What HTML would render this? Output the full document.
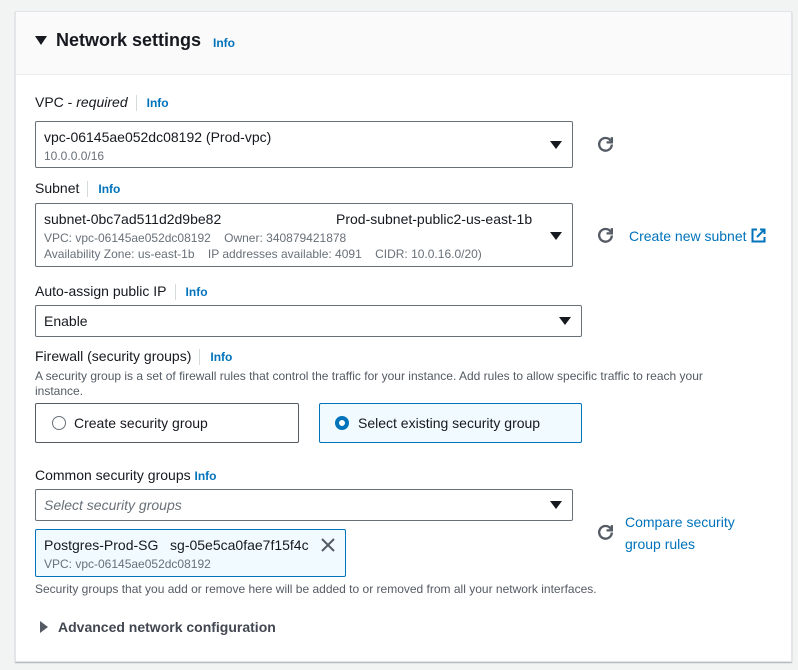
<!DOCTYPE html>
<html><head><style>
*{box-sizing:border-box;margin:0;padding:0}
body{width:798px;height:670px;background:#f2f3f3;font-family:"Liberation Sans",Arial,sans-serif;color:#16191f;position:relative;overflow:hidden}
.panel{position:absolute;left:15px;top:11px;width:777px;height:651px;background:#fff;border:1px solid #e1e4e8;box-shadow:0 1px 1px rgba(0,28,36,.3)}
.hdr{position:absolute;left:0;top:0;width:100%;height:63px;background:#fafafa;border-bottom:1px solid #eaeded}
.a{position:absolute;white-space:nowrap}
.info{color:#0073bb;font-weight:bold;font-size:12px}
.lbl{font-size:14px}
.sep{display:inline-block;width:1px;height:16px;background:#d5dbdb;vertical-align:middle;margin:0 10px 0 8px}
.box{position:absolute;border:1px solid #687078;border-radius:2px;background:#fff}
.sm{font-size:12px;color:#687078}
.tri{position:absolute;width:0;height:0;border-left:6px solid transparent;border-right:6px solid transparent;border-top:8px solid #16191f}
.link{color:#0073bb;font-size:14px}
</style></head><body>
<div class="panel">
<div class="hdr"></div>
</div>
<div class="a" style="left:35px;top:36px;width:0;height:0;border-left:6px solid transparent;border-right:6px solid transparent;border-top:9px solid #16191f"></div>
<div class="a" style="left:56px;top:30px;font-size:18px;font-weight:bold">Network settings</div>
<div class="a info" style="left:213px;top:36px">Info</div>

<div class="a lbl" style="left:35px;top:94px">VPC - <i>required</i><span class="sep"></span><span class="info">Info</span></div>
<div class="box" style="left:35px;top:121px;width:538px;height:47px"></div>
<div class="a lbl" style="left:44px;top:129px">vpc-06145ae052dc08192 (Prod-vpc)</div>
<div class="a sm" style="left:44px;top:149px">10.0.0.0/16</div>
<div class="tri" style="left:550px;top:141px"></div>
<svg class="a" style="left:596px;top:135px" width="19" height="19" viewBox="0 0 18 18"><path d="M14 5.5A6 6 0 1 0 15 9" fill="none" stroke="#545b64" stroke-width="2.2"/><path d="M15 2v5h-5" fill="none" stroke="#545b64" stroke-width="2.2"/></svg>

<div class="a lbl" style="left:35px;top:180px">Subnet<span class="sep"></span><span class="info">Info</span></div>
<div class="box" style="left:35px;top:203px;width:538px;height:64px"></div>
<div class="a lbl" style="left:44px;top:211px">subnet-0bc7ad511d2d9be82</div>
<div class="a lbl" style="left:336px;top:211px">Prod-subnet-public2-us-east-1b</div>
<div class="a sm" style="left:44px;top:231px">VPC: vpc-06145ae052dc08192&nbsp;&nbsp;&nbsp;&nbsp;Owner: 340879421878</div>
<div class="a sm" style="left:44px;top:247px">Availability Zone: us-east-1b&nbsp;&nbsp;&nbsp;&nbsp;IP addresses available: 4091&nbsp;&nbsp;&nbsp;&nbsp;CIDR: 10.0.16.0/20)</div>
<div class="tri" style="left:550px;top:232px"></div>
<svg class="a" style="left:596px;top:226px" width="19" height="19" viewBox="0 0 18 18"><path d="M14 5.5A6 6 0 1 0 15 9" fill="none" stroke="#545b64" stroke-width="2.2"/><path d="M15 2v5h-5" fill="none" stroke="#545b64" stroke-width="2.2"/></svg>
<div class="a link" style="left:629px;top:228px">Create new subnet</div>
<svg class="a" style="left:751px;top:228px" width="15" height="15" viewBox="0 0 15 15"><path d="M6 1.5H1.5v12h12V9" fill="none" stroke="#0073bb" stroke-width="2"/><path d="M9 1.5h4.5V6M13.5 1.5L6 9" fill="none" stroke="#0073bb" stroke-width="2"/></svg>

<div class="a lbl" style="left:35px;top:283px">Auto-assign public IP<span class="sep"></span><span class="info">Info</span></div>
<div class="box" style="left:35px;top:305px;width:547px;height:32px"></div>
<div class="a lbl" style="left:44px;top:313px">Enable</div>
<div class="tri" style="left:559px;top:317px"></div>

<div class="a lbl" style="left:35px;top:348px">Firewall (security groups)<span class="sep"></span><span class="info">Info</span></div>
<div class="a sm" style="left:35px;top:369px;white-space:normal;width:705px;line-height:15px;color:#545b64">A security group is a set of firewall rules that control the traffic for your instance. Add rules to allow specific traffic to reach your instance.</div>
<div class="box" style="left:35px;top:403px;width:264px;height:40px;border-color:#545b64"></div>
<div class="a" style="left:52px;top:416px;width:14px;height:14px;border:1.5px solid #687078;border-radius:50%"></div>
<div class="a lbl" style="left:74px;top:415px">Create security group</div>
<div class="box" style="left:319px;top:403px;width:263px;height:40px;border-color:#0073bb;background:#f1faff"></div>
<div class="a" style="left:335px;top:416px;width:14px;height:14px;border:4px solid #0073bb;border-radius:50%;background:#fff"></div>
<div class="a lbl" style="left:358px;top:415px">Select existing security group</div>

<div class="a lbl" style="left:35px;top:467px">Common security groups <span class="info">Info</span></div>
<div class="box" style="left:35px;top:489px;width:538px;height:32px"></div>
<div class="a lbl" style="left:44px;top:497px;font-style:italic;color:#687078">Select security groups</div>
<div class="tri" style="left:550px;top:501px"></div>
<svg class="a" style="left:596px;top:523px" width="19" height="19" viewBox="0 0 18 18"><path d="M14 5.5A6 6 0 1 0 15 9" fill="none" stroke="#545b64" stroke-width="2.2"/><path d="M15 2v5h-5" fill="none" stroke="#545b64" stroke-width="2.2"/></svg>
<div class="a link" style="left:625px;top:511px;line-height:22px">Compare security<br>group rules</div>

<div class="box" style="left:35px;top:529px;width:311px;height:48px;border-color:#0073bb;background:#f1faff"></div>
<div class="a lbl" style="left:44px;top:537px">Postgres-Prod-SG&nbsp;&nbsp;&nbsp;sg-05e5ca0fae7f15f4c</div>
<svg class="a" style="left:321px;top:538px" width="14" height="14" viewBox="0 0 14 14"><path d="M1 1L13 13M13 1L1 13" stroke="#545b64" stroke-width="2"/></svg>
<div class="a sm" style="left:44px;top:557px">VPC: vpc-06145ae052dc08192</div>
<div class="a sm" style="left:35px;top:582px;color:#545b64">Security groups that you add or remove here will be added to or removed from all your network interfaces.</div>

<div class="a" style="left:40px;top:621px;width:0;height:0;border-top:6px solid transparent;border-bottom:6px solid transparent;border-left:8px solid #545b64"></div>
<div class="a lbl" style="left:58px;top:619px;font-weight:bold;color:#414750">Advanced network configuration</div>
</body></html>
